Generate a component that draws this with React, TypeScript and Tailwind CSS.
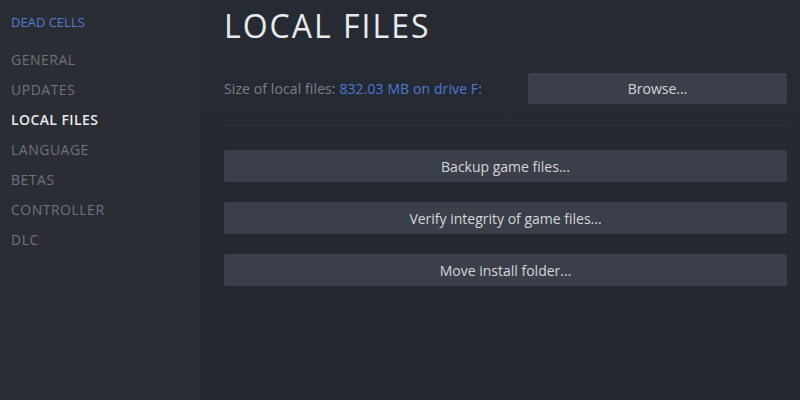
import React from "react";

const navItems = ["GENERAL", "UPDATES", "LOCAL FILES", "LANGUAGE", "BETAS", "CONTROLLER", "DLC"];

function ActionButton({ label }: { label: string }) {
  return (
    <button className="h-[32px] w-full rounded-[2px] bg-[#3b3f49] text-[14px] text-[#d4d6da]">
      {label}
    </button>
  );
}

export default function App() {
  return (
    <div
      className="flex h-[400px] w-[800px] overflow-hidden bg-[#262932]"
      style={{ fontFamily: '"Open Sans", "Noto Sans", sans-serif' }}
    >
      <aside className="flex w-[200px] shrink-0 flex-col bg-[#2a2d33] pl-[11px] pt-[14px]">
        <div className="text-[13px] leading-[16px] text-[#4d7fd6]">DEAD CELLS</div>
        <nav className="mt-[15px] flex flex-col">
          {navItems.map((item) => (
            <div
              key={item}
              className={
                item === "LOCAL FILES"
                  ? "h-[30px] text-[14px] font-semibold leading-[30px] tracking-[0.4px] text-[#e8e9eb]"
                  : "h-[30px] text-[14px] leading-[30px] tracking-[0.5px] text-[#6f737b]"
              }
            >
              {item}
            </div>
          ))}
        </nav>
      </aside>

      <main className="flex flex-1 flex-col bg-gradient-to-b from-[#262a33] to-[#252830] pl-[24px] pr-[13px]">
        <h1 className="mt-[5px] text-[32px] font-normal leading-[42px] tracking-[2px] text-[#e9eaec]">LOCAL FILES</h1>

        <div className="mt-[26px] flex h-[31px] items-center">
          <div className="flex-1 text-[14px] tracking-[0.1px] text-[#7d818a]">
            Size of local files: <span className="text-[#4a7bd3]">832.03 MB on drive F:</span>
          </div>
          <button className="h-[31px] w-[259px] rounded-[2px] bg-[#3b3f49] text-[14px] text-[#d4d6da]">
            Browse...
          </button>
        </div>

        <div className="mt-[22px] h-px bg-[#2e323b]" />

        <div className="mt-[23px] flex flex-col gap-[20px]">
          <ActionButton label="Backup game files..." />
          <ActionButton label="Verify integrity of game files..." />
          <ActionButton label="Move install folder..." />
        </div>
      </main>
    </div>
  );
}
